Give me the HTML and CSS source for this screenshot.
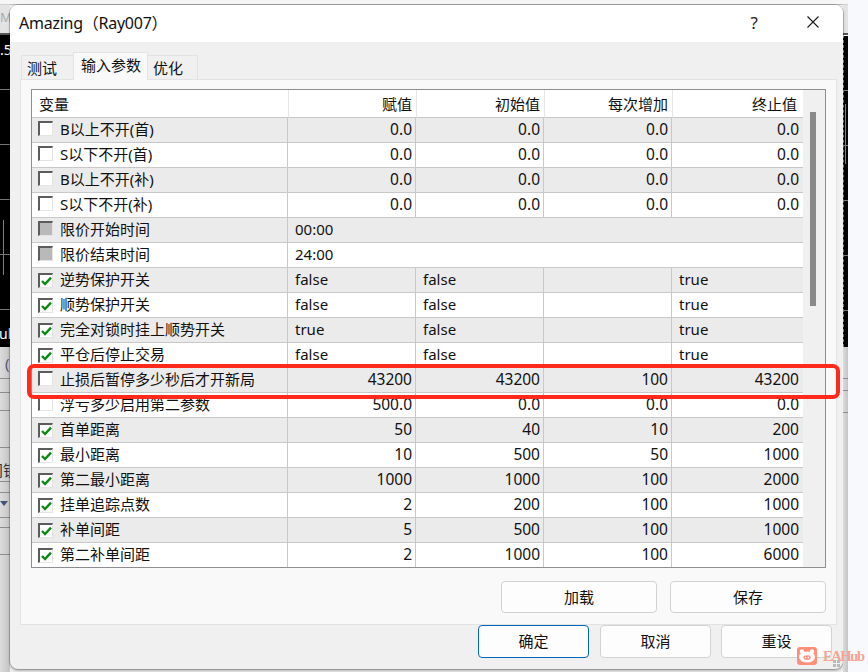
FILE: index.html
```html
<!DOCTYPE html>
<html lang="zh-CN">
<head>
    <meta charset="UTF-8">
    <meta name="viewport" content="width=device-width, initial-scale=1.0">
    <title>Amazing（Ray007）</title>
    <link rel="stylesheet" href="styles.css">
</head>
<body>
    <!-- terminal behind the dialog, only its edges show -->
    <div class="side side-left">
        <div class="side-top"><span>M</span></div>
        <div class="side-chart">
            <span class="price">.5</span>
            <i class="candle candle-left"></i>
            <span class="axis-label">ul</span>
        </div>
        <div class="side-panel">
            <span class="paren">(</span>
            <span class="rule rule-a"></span>
            <span class="rule rule-b"></span>
            <span class="rule rule-c"></span>
            <span class="rule rule-g"></span>
            <span class="cut-text">间锁</span>
            <span class="rule rule-h"></span>
            <span class="rule rule-i"></span>
            <span class="arrow"></span>
            <span class="rule rule-j"></span>
            <span class="rule rule-k"></span>
            <span class="rule rule-l"></span>
        </div>
    </div>

    <div class="dialog-col">
        <div class="dialog">
            <div class="titlebar">
                <span class="title">Amazing（Ray007）</span>
                <span class="help">?</span>
                <svg class="close" width="12" height="12" viewBox="0 0 12 12"><path d="M0.5 0.5L11.5 11.5M11.5 0.5L0.5 11.5" fill="none" stroke="#1a1a1a" stroke-width="1.1"/></svg>
            </div>

            <div class="tabs">
                <div class="tab tab-first">测试</div>
                <div class="tab active">输入参数</div>
                <div class="tab tab-last">优化</div>
            </div>

            <div class="panel">
                <div class="grid-box">
                    <table class="params">
                        <colgroup>
                            <col class="col-name"><col class="col-val"><col class="col-val"><col class="col-val"><col class="col-end">
                        </colgroup>
                        <thead>
                            <tr>
                                <th class="name">变量</th>
                                <th>赋值</th>
                                <th>初始值</th>
                                <th>每次增加</th>
                                <th>终止值</th>
                            </tr>
                        </thead>
                        <tbody>
                            <tr>
                                <td class="name"><span class="check"></span>B以上不开(首)</td>
                                <td>0.0</td><td>0.0</td><td>0.0</td><td>0.0</td>
                            </tr>
                            <tr>
                                <td class="name"><span class="check"></span>S以下不开(首)</td>
                                <td>0.0</td><td>0.0</td><td>0.0</td><td>0.0</td>
                            </tr>
                            <tr>
                                <td class="name"><span class="check"></span>B以上不开(补)</td>
                                <td>0.0</td><td>0.0</td><td>0.0</td><td>0.0</td>
                            </tr>
                            <tr>
                                <td class="name"><span class="check"></span>S以下不开(补)</td>
                                <td>0.0</td><td>0.0</td><td>0.0</td><td>0.0</td>
                            </tr>
                            <tr>
                                <td class="name"><span class="check off"></span>限价开始时间</td>
                                <td class="text" colspan="4">00:00</td>
                            </tr>
                            <tr>
                                <td class="name"><span class="check off"></span>限价结束时间</td>
                                <td class="text" colspan="4">24:00</td>
                            </tr>
                            <tr>
                                <td class="name"><span class="check on"><svg viewBox="0 0 11 10"><path d="M1 5L4 8L10 1.6" fill="none" stroke="#0b8a12" stroke-width="2.4"/></svg></span>逆势保护开关</td>
                                <td class="text">false</td><td class="text">false</td><td></td><td class="text">true</td>
                            </tr>
                            <tr>
                                <td class="name"><span class="check on"><svg viewBox="0 0 11 10"><path d="M1 5L4 8L10 1.6" fill="none" stroke="#0b8a12" stroke-width="2.4"/></svg></span>顺势保护开关</td>
                                <td class="text">false</td><td class="text">false</td><td></td><td class="text">true</td>
                            </tr>
                            <tr>
                                <td class="name"><span class="check on"><svg viewBox="0 0 11 10"><path d="M1 5L4 8L10 1.6" fill="none" stroke="#0b8a12" stroke-width="2.4"/></svg></span>完全对锁时挂上顺势开关</td>
                                <td class="text">true</td><td class="text">false</td><td></td><td class="text">true</td>
                            </tr>
                            <tr>
                                <td class="name"><span class="check on"><svg viewBox="0 0 11 10"><path d="M1 5L4 8L10 1.6" fill="none" stroke="#0b8a12" stroke-width="2.4"/></svg></span>平仓后停止交易</td>
                                <td class="text">false</td><td class="text">false</td><td></td><td class="text">true</td>
                            </tr>
                            <tr>
                                <td class="name"><span class="check"></span>止损后暂停多少秒后才开新局</td>
                                <td>43200</td><td>43200</td><td>100</td><td>43200</td>
                            </tr>
                            <tr>
                                <td class="name"><span class="check"></span>浮亏多少启用第二参数</td>
                                <td>500.0</td><td>0.0</td><td>0.0</td><td>0.0</td>
                            </tr>
                            <tr>
                                <td class="name"><span class="check on"><svg viewBox="0 0 11 10"><path d="M1 5L4 8L10 1.6" fill="none" stroke="#0b8a12" stroke-width="2.4"/></svg></span>首单距离</td>
                                <td>50</td><td>40</td><td>10</td><td>200</td>
                            </tr>
                            <tr>
                                <td class="name"><span class="check on"><svg viewBox="0 0 11 10"><path d="M1 5L4 8L10 1.6" fill="none" stroke="#0b8a12" stroke-width="2.4"/></svg></span>最小距离</td>
                                <td>10</td><td>500</td><td>50</td><td>1000</td>
                            </tr>
                            <tr>
                                <td class="name"><span class="check on"><svg viewBox="0 0 11 10"><path d="M1 5L4 8L10 1.6" fill="none" stroke="#0b8a12" stroke-width="2.4"/></svg></span>第二最小距离</td>
                                <td>1000</td><td>1000</td><td>100</td><td>2000</td>
                            </tr>
                            <tr>
                                <td class="name"><span class="check on"><svg viewBox="0 0 11 10"><path d="M1 5L4 8L10 1.6" fill="none" stroke="#0b8a12" stroke-width="2.4"/></svg></span>挂单追踪点数</td>
                                <td>2</td><td>200</td><td>100</td><td>1000</td>
                            </tr>
                            <tr>
                                <td class="name"><span class="check on"><svg viewBox="0 0 11 10"><path d="M1 5L4 8L10 1.6" fill="none" stroke="#0b8a12" stroke-width="2.4"/></svg></span>补单间距</td>
                                <td>5</td><td>500</td><td>100</td><td>1000</td>
                            </tr>
                            <tr>
                                <td class="name"><span class="check on"><svg viewBox="0 0 11 10"><path d="M1 5L4 8L10 1.6" fill="none" stroke="#0b8a12" stroke-width="2.4"/></svg></span>第二补单间距</td>
                                <td>2</td><td>1000</td><td>100</td><td>6000</td>
                            </tr>
                        </tbody>
                    </table>
                    <div class="scrollbar"><div class="thumb"></div></div>
                </div>

                <div class="panel-actions">
                    <button class="btn btn-wide">加载</button>
                    <button class="btn btn-wide">保存</button>
                </div>
            </div>

            <div class="footer">
                <button class="btn btn-ok">确定</button>
                <button class="btn">取消</button>
                <button class="btn">重设</button>
            </div>

            <div class="highlight"></div>
        </div>
    </div>

    <div class="side side-right">
        <div class="side-top"></div>
        <div class="side-chart"><i class="candle candle-right"></i></div>
        <div class="side-panel">
            <span class="rule rule-d"></span>
            <span class="rule rule-e"></span>
            <span class="rule rule-f"></span>
        </div>
    </div>

    <div class="watermark">
        <svg width="20" height="18" viewBox="0 0 20 18">
            <rect width="20" height="18" rx="3" fill="#ff8f78"/>
            <circle cx="5" cy="4.5" r="2.2" fill="#fff"/>
            <circle cx="15" cy="4.5" r="2.2" fill="#fff"/>
            <ellipse cx="10" cy="10" rx="8" ry="5.6" fill="#fff"/>
            <ellipse cx="10" cy="10.5" rx="3.6" ry="2.3" fill="#ff8f78"/>
            <circle cx="8.6" cy="10.5" r=".8" fill="#fff"/>
            <circle cx="11.4" cy="10.5" r=".8" fill="#fff"/>
        </svg>
        <span>EAHub</span>
        <svg class="grip" width="8" height="8" viewBox="0 0 8 8">
            <path d="M0 0h3v3H0zM4 0h3v3H4zM0 4h3v3H0zM4 4h3v3H4z" fill="#b9b9b9"/>
        </svg>
    </div>
</body>
</html>
```

FILE: styles.css
```css
* {
    margin: 0;
    padding: 0;
    box-sizing: border-box;
}

html, body {
    height: 672px;
    overflow: hidden;
}

body {
    display: flex;
    background: #f8f9fd;
    font-family: "Noto Sans", "Noto Sans CJK SC", sans-serif;
    font-size: 15px;
    color: #111;
}

/* backdrop strips */
.side {
    display: flex;
    flex-direction: column;
    flex: none;
    height: 672px;
}

.side-left {
    width: 10px;
}

.side-right {
    width: 5px;
}

.side-top {
    height: 35px;
    overflow: hidden;
    background: linear-gradient(#f6f6f6 0, #f6f6f6 4px, #bdbdbd 4px, #e4e4e4 5px, #e2e2e2 100%);
    border-bottom: 2px solid #555;
    color: #aaa;
    font-size: 13px;
    line-height: 35px;
}

.side-chart {
    position: relative;
    height: 312px;
    overflow: hidden;
    background: repeating-linear-gradient(#000 0, #000 54px, #777 54px, #777 55px);
    color: #fff;
    font-size: 14px;
}

.side-right .side-chart {
    border-top: 1px solid #fff;
    border-left: 1px dashed #777;
}

.side-panel {
    position: relative;
    flex: 1;
    overflow: hidden;
    background: linear-gradient(90deg, #dcdcdc, #c4c4c4);
    color: #333;
}

.price {
    position: absolute;
    left: 0;
    top: 6px;
    line-height: 18px;
}

.axis-label {
    position: absolute;
    left: -1px;
    top: 290px;
    line-height: 18px;
}

.candle {
    position: absolute;
    width: 1px;
    background: #1fc31f;
}

.candle-left {
    left: 3px;
    top: 185px;
    height: 55px;
}

.candle-right {
    left: 1px;
    top: 68px;
    height: 60px;
}

.paren {
    position: absolute;
    left: 5px;
    top: 6px;
    line-height: 20px;
    color: #557;
}

.cut-text {
    position: absolute;
    left: -12px;
    top: 113px;
    line-height: 20px;
    white-space: nowrap;
}

.rule {
    position: absolute;
    left: 0;
    width: 100%;
    height: 1px;
    background: #8c8c8c;
}

.rule-a { top: 31px; }
.rule-b { top: 45px; }
.rule-c { top: 63px; }
.rule-g { top: 100px; }
.rule-h { top: 134px; }
.rule-i { top: 145px; }
.rule-j { top: 170px; }
.rule-k { top: 180px; }
.rule-l { top: 207px; }
.rule-d { top: 31px; }
.rule-e { top: 43px; }
.rule-f { top: 65px; }

.arrow {
    position: absolute;
    left: 0;
    top: 154px;
    border-left: 4px solid transparent;
    border-right: 4px solid transparent;
    border-top: 5px solid #3f5478;
}

/* dialog */
.dialog-col {
    flex: none;
    width: 833px;
    height: 672px;
    padding-top: 5px;
    background: linear-gradient(#f6f6f6 0, #f6f6f6 4px, #bdbdbd 4px, #bdbdbd 5px, #f0f0f0 5px);
}

.dialog {
    position: relative;
    height: 664px;
    background: #f0f0f0;
    border-radius: 8px;
    box-shadow: 0 0 0 1px rgba(0, 0, 0, 0.18), 0 2px 3px rgba(0, 0, 0, 0.25);
}

.titlebar {
    display: flex;
    align-items: center;
    height: 37px;
    padding: 0 0 3px 9px;
    background: #fff;
    border-radius: 8px 8px 0 0;
}

.title {
    font-size: 16px;
    letter-spacing: -0.25px;
    color: #111;
}

.help {
    margin-left: auto;
    margin-right: 49px;
    font-size: 17px;
    color: #222;
}

.close {
    margin-right: 24px;
}

.tabs {
    display: flex;
    align-items: flex-end;
    height: 37px;
    padding-left: 11px;
}

.tab {
    height: 24px;
    border: 1px solid #e3e3e3;
    border-bottom: none;
    line-height: 25px;
    white-space: nowrap;
}

.tab-first {
    width: 52px;
    padding-left: 5px;
    border-right: none;
}

.tab-last {
    width: 50px;
    padding-left: 5px;
    border-left: none;
}

.tab.active {
    position: relative;
    z-index: 1;
    width: 75px;
    height: 28px;
    margin-bottom: -1px;
    padding-left: 7px;
    background: #f9f9f9;
    line-height: 24px;
}

.panel {
    width: 817px;
    height: 546px;
    margin-left: 10px;
    padding: 9px 10px 0;
    background: #f9f9f9;
    border: 1px solid #e3e3e3;
}

.grid-box {
    display: flex;
    width: 795px;
    height: 479px;
    overflow: hidden;
    background: #fff;
    border: 1px solid #8d8d92;
}

.params {
    flex: none;
    width: 771px;
    table-layout: fixed;
    border-collapse: separate;
    border-spacing: 0;
    background: #fff;
}

.col-name { width: 256px; }
.col-val { width: 128px; }
.col-end { width: 131px; }

.params th {
    height: 28px;
    padding-right: 4px;
    font-weight: 400;
    text-align: right;
    border-bottom: 1px solid #c8c8c8;
    border-left: 1px solid #e6e6e6;
}

.params th:last-child {
    padding-right: 6px;
}

.params th.name {
    padding-left: 7px;
    text-align: left;
    border-left: none;
}

.params td {
    height: 25px;
    padding: 0 3px 0 0;
    font-size: 15.5px;
    line-height: 23px;
    vertical-align: top;
    text-align: right;
    white-space: nowrap;
    border-bottom: 1px solid #c8c8c8;
    border-right: 1px solid #c8c8c8;
}

.params td:last-child {
    padding-right: 4px;
    border-right: none;
}

.params tbody tr:nth-child(odd) td {
    background: #ebebeb;
}

.params td.name {
    padding-left: 6px;
    font-size: 15px;
    text-align: left;
}

.params td.text {
    padding-left: 7px;
    font-size: 15px;
    text-align: left;
}

.check {
    display: inline-flex;
    align-items: center;
    justify-content: center;
    width: 15px;
    height: 15px;
    margin-right: 7px;
    vertical-align: -1px;
    background: #fff;
    border-top: 2px solid #5c5c5c;
    border-left: 2px solid #5c5c5c;
    border-right: 1px solid #e4e4e4;
    border-bottom: 1px solid #e4e4e4;
}

.check.off {
    background: #b9b9b9;
}

.check svg {
    width: 11px;
    height: 10px;
}

.scrollbar {
    flex: 1;
    background: #f0f0f0;
    padding: 22px 7px 0;
}

.thumb {
    width: 6px;
    height: 194px;
    background: #8a8a8a;
}

.panel-actions {
    display: flex;
    justify-content: flex-end;
    gap: 13px;
    margin-top: 13px;
}

.btn {
    width: 111px;
    height: 33px;
    padding-bottom: 2px;
    background: #fdfdfd;
    border: 1px solid #d2d2d2;
    border-radius: 4px;
    font-family: inherit;
    font-size: 15px;
    color: #111;
}

.btn-wide {
    width: 156px;
    height: 32px;
}

.btn-ok {
    margin-right: 1px;
    border-color: #0067c0;
}

.footer {
    display: flex;
    justify-content: flex-end;
    gap: 10px;
    padding-right: 11px;
}

/* red marker drawn over the screenshot */
.highlight {
    position: absolute;
    left: 17px;
    top: 359px;
    width: 813px;
    height: 35px;
    border: 4px solid #ff2a1c;
    border-radius: 7px;
}

.watermark {
    position: absolute;
    left: 797px;
    top: 647px;
    display: flex;
    align-items: center;
    gap: 6px;
    color: #f6a493;
    font-family: "Liberation Serif", serif;
    font-size: 14.5px;
    font-weight: 700;
    letter-spacing: -1.4px;
    line-height: 18px;
}

.grip {
    position: absolute;
    left: 36px;
    top: 13px;
}
```
